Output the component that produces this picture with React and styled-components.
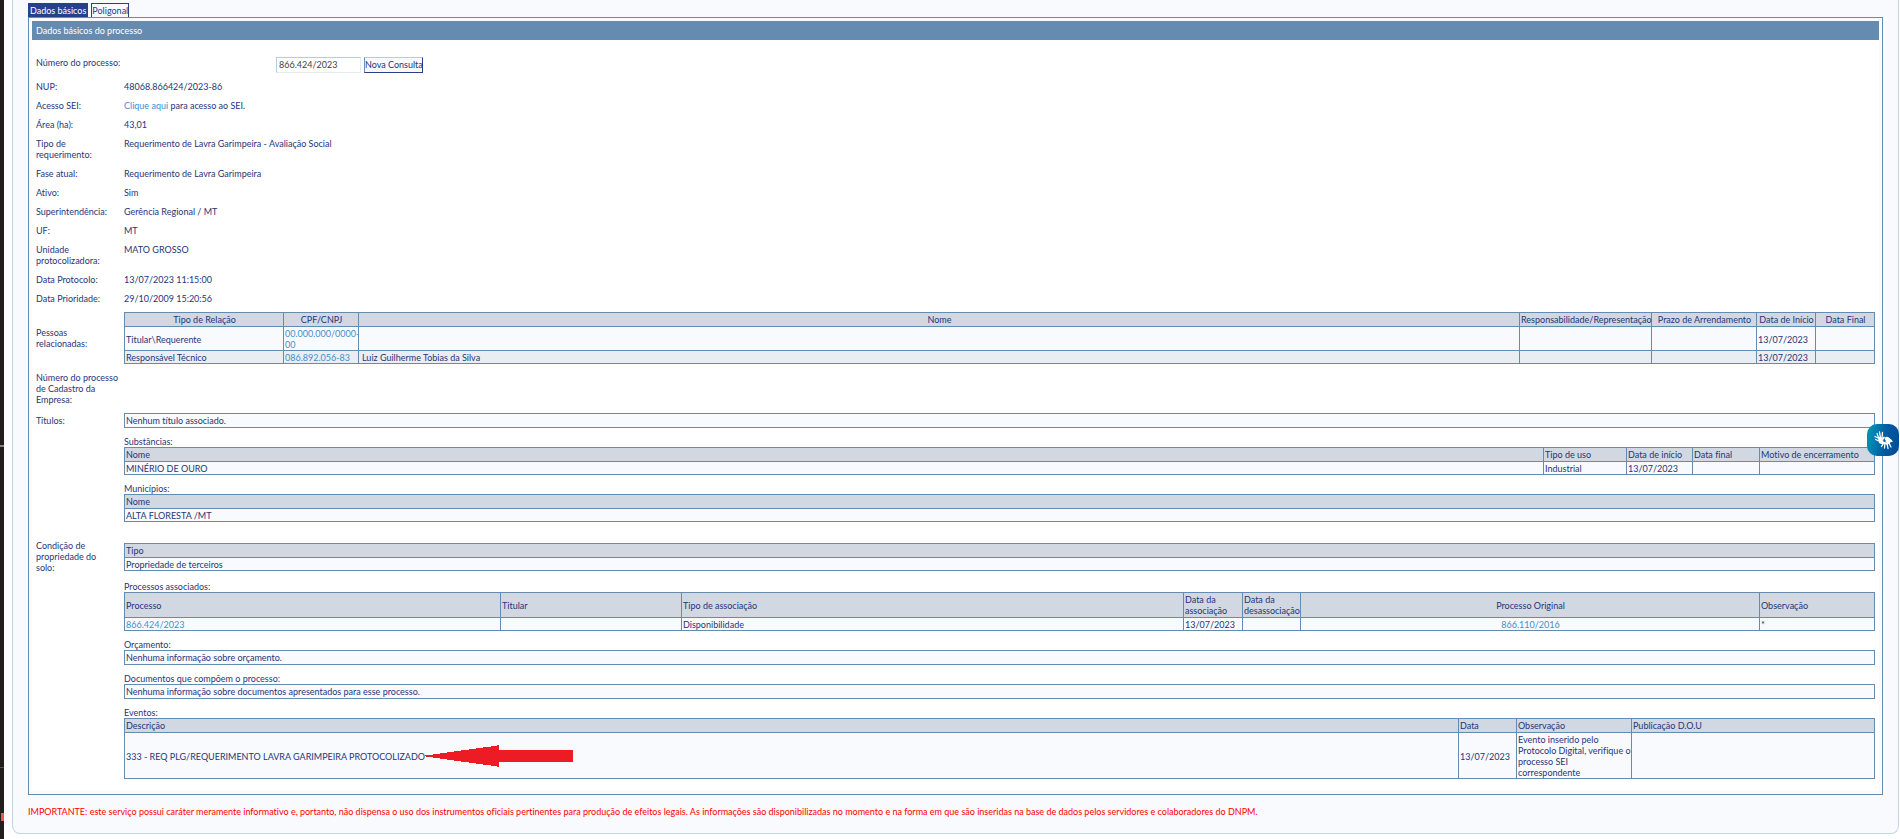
import React from 'react';
import styled, { createGlobalStyle } from 'styled-components';

const navy = '#27408b';
const ink = '#1f3579';
const steel = '#668bb1';
const sky = '#3d90cf';
const mist = '#f9fafd';

const GlobalStyle = createGlobalStyle`
  * { box-sizing: border-box; }
  body {
    margin: 0;
    background: #fff;
    color: ${ink};
    font: 9px/11px Lato, 'DejaVu Sans Condensed', sans-serif;
    font-variant-ligatures: none;
  }
`;

const Page = styled.div`
  display: flex;
  min-height: 100vh;
`;

const EdgeStrip = styled.div`
  flex: 0 0 4px;
  display: flex;
  flex-direction: column;
  align-items: flex-end;
  background: #211e1c;
`;

const EdgeMark = styled.span`
  width: ${(p) => p.$width}px;
  height: ${(p) => p.$height}px;
  margin-top: ${(p) => p.$gap}px;
  background: ${(p) => p.$color};
`;

const Card = styled.main`
  flex: 1;
  min-width: 0;
  margin: 0 1px 5px 8px;
  padding: 3px 15px 14px;
  background: ${mist};
  border: 1px solid #c3d6e2;
  border-top: 0;
  border-radius: 0 0 8px 8px;
`;

const Tabs = styled.nav`
  display: flex;
  gap: 3px;
`;

const Tab = styled.button`
  height: 14px;
  padding: 0 ${(p) => (p.$active ? 1 : 0)}px;
  font: inherit;
  font-variant-ligatures: none;
  color: ${(p) => (p.$active ? '#fff' : navy)};
  background: ${(p) => (p.$active ? navy : mist)};
  border: 1px solid ${navy};
  border-bottom: 0;
`;

const Panel = styled.section`
  padding: 3px;
  border: 1px solid ${steel};
`;

const PanelTitle = styled.h1`
  margin: 0;
  padding: 4px;
  color: #fff;
  background: ${steel};
  font-size: 9px;
  font-weight: 400;
  line-height: 11px;
`;

const Fields = styled.div`
  display: flex;
  flex-direction: column;
  gap: 8px;
  padding: 17px 4px 12px;
  background: #fff;
`;

const Field = styled.div`
  display: grid;
  grid-template-columns: 88px minmax(0, 1fr);
  align-items: ${(p) => p.$align || 'start'};
`;

const FieldLabel = styled.div`
  padding-right: 5px;
  white-space: pre-line;
`;

const Spacer = styled.div`
  height: 2px;
`;

const SearchRow = styled.form`
  display: flex;
  align-items: flex-start;
`;

const SearchLabel = styled.label`
  flex: 0 0 240px;
`;

const NumberInput = styled.input`
  width: 85px;
  height: 16px;
  margin-right: 3px;
  padding: 0 2px 2px;
  font: inherit;
  color: #444;
  background: #fff;
  border: 1px solid #b9cdd8;
  border-right-color: #e6ebee;
  border-bottom-color: #e6ebee;
`;

const QueryButton = styled.button`
  width: 59px;
  height: 16px;
  padding: 0 0 2px;
  font: inherit;
  white-space: nowrap;
  color: ${ink};
  background: ${mist};
  border: 1px solid ${navy};
  border-top-color: #b9cdd8;
  border-left-color: #6d8db4;
`;

const Link = styled.a`
  color: ${sky};
  text-decoration: none;
`;

const SubHeading = styled.h2`
  margin: 0;
  font: inherit;
  font-variant-ligatures: none;
`;

const Notice = styled.p`
  margin: 0;
  padding: 1px;
  background: ${mist};
  border: 1px solid ${steel};
`;

const DataTable = styled.table`
  width: 100%;
  table-layout: fixed;
  border-collapse: collapse;
  background: ${mist};
`;

const Col = styled.col`
  width: ${(p) => (p.$width ? `${p.$width}px` : 'auto')};
`;

const Head = styled.th`
  padding: 1px 0 1px 1px;
  font-weight: 400;
  white-space: ${(p) => (p.$wrap ? 'normal' : 'nowrap')};
  text-align: ${(p) => p.$align || 'left'};
  background: #d1d8e2;
  border: 1px solid ${steel};
`;

const Row = styled.tr`
  height: 13px;
  background: ${(p) => (p.$alt ? '#eaeef2' : mist)};
`;

const Cell = styled.td`
  padding: 1px 0 0 1px;
  text-align: ${(p) => p.$align || 'left'};
  border: 1px solid ${steel};
`;

const NameCell = styled(Cell)`
  padding-left: 3px;
`;

const EventContent = styled.div`
  display: flex;
  align-items: center;
`;

const Warning = styled.p`
  margin: 11px 0 0;
  color: #f00;
`;

const LibrasButton = styled.button`
  position: fixed;
  top: 424px;
  right: 1px;
  display: grid;
  place-items: center;
  width: 32px;
  height: 32px;
  padding: 0;
  border: 0;
  border-radius: 10px;
  background: linear-gradient(100deg, #0090b4 10%, #0058a0 60%, #004a98);
`;

function LabelledField({ label, children, align }) {
  return (
    <Field $align={align}>
      <FieldLabel>{label}</FieldLabel>
      <div>{children}</div>
    </Field>
  );
}

function Table({ label, columns, children }) {
  return (
    <DataTable aria-label={label}>
      <colgroup>
        {columns.map((c, i) => (
          <Col key={i} $width={c.width} />
        ))}
      </colgroup>
      <thead>
        <tr>
          {columns.map((c, i) => (
            <Head key={i} scope="col" $align={c.align} $wrap={c.wrap}>
              {c.title}
            </Head>
          ))}
        </tr>
      </thead>
      <tbody>{children}</tbody>
    </DataTable>
  );
}

function Block({ title, children }) {
  return (
    <LabelledField label="">
      <SubHeading>{title}</SubHeading>
      {children}
    </LabelledField>
  );
}

const Arrow = () => (
  <svg width="148" height="22" viewBox="0 0 148 22" aria-hidden="true">
    <path
      fill="#ed1c24"
      d="M0 10h8V9h7V8h7V7h7V6h7V5h8V4h7V3h7V2h8V1h6V0h2v5h74v12H74v5h-2v-1h-6v-1h-8v-1h-7v-1h-7v-1h-8v-1h-7v-1h-7v-1h-7v-1H8v-1H1v-1H0z"
    />
  </svg>
);

const HandsIcon = () => (
  <svg width="19" height="19" viewBox="0 0 38 38" fill="none" stroke="#fff" strokeLinecap="round" aria-hidden="true">
    <path fill="#fff" stroke="none" d="M8 13 Q13 11 16 14 L20 11 Q23 13 19 18 Q23 24 17 27 L10 24Z" />
    <path strokeWidth="2.6" d="M10 15L2 11M10 16L6 5M13 14L11 2M16 14L17 3M10 20L3 17" />
    <path fill="#fff" stroke="none" d="M19 14 Q25 9 31 14 L36 19 L31 25 Q27 29 22 26 L17 23 L24 20Z" />
    <path strokeWidth="2.6" d="M32 17L36 21M29 22L34 32M26 24L28 35M22 24L21 34M20 23L15 31" />
    <path stroke="#0075aa" strokeWidth="1.5" d="M22 14L18 20L24 22" />
  </svg>
);

const simpleFields = [
  ['NUP:', '48068.866424/2023-86'],
  ['Acesso SEI:', <><Link href="#sei">Clique aqui</Link> para acesso ao SEI.</>],
  ['Área (ha):', '43,01'],
  ['Tipo de requerimento:', 'Requerimento de Lavra Garimpeira - Avaliação Social'],
  ['Fase atual:', 'Requerimento de Lavra Garimpeira'],
  ['Ativo:', 'Sim'],
  ['Superintendência:', 'Gerência Regional / MT'],
  ['UF:', 'MT'],
  ['Unidade protocolizadora:', 'MATO GROSSO'],
  ['Data Protocolo:', '13/07/2023 11:15:00'],
  ['Data Prioridade:', '29/10/2009 15:20:56'],
];

const peopleColumns = [
  { title: 'Tipo de Relação', width: 159, align: 'center' },
  { title: 'CPF/CNPJ', width: 75, align: 'center' },
  { title: 'Nome', align: 'center' },
  { title: 'Responsabilidade/Representação', width: 132, align: 'center' },
  { title: 'Prazo de Arrendamento', width: 105, align: 'center' },
  { title: 'Data de Início', width: 59, align: 'center' },
  { title: 'Data Final', width: 59, align: 'center' },
];

const substanceColumns = [
  { title: 'Nome' },
  { title: 'Tipo de uso', width: 83 },
  { title: 'Data de início', width: 66 },
  { title: 'Data final', width: 67 },
  { title: 'Motivo de encerramento', width: 115 },
];

const processColumns = [
  { title: 'Processo', width: 376 },
  { title: 'Titular', width: 181 },
  { title: 'Tipo de associação', width: 502 },
  { title: 'Data da associação', width: 59, wrap: true },
  { title: 'Data da desassociação', width: 58, wrap: true },
  { title: 'Processo Original', align: 'center' },
  { title: 'Observação', width: 115 },
];

const eventColumns = [
  { title: 'Descrição' },
  { title: 'Data', width: 58 },
  { title: 'Observação', width: 115 },
  { title: 'Publicação D.O.U', width: 243 },
];

export default function App() {
  return (
    <Page>
      <GlobalStyle />
      <EdgeStrip>
        <EdgeMark $gap={445} $width={4} $height={2} $color="#85827f" />
        <EdgeMark $gap={320} $width={4} $height={1} $color="#55524f" />
        <EdgeMark $gap={45} $width={3} $height={8} $color="#f4504c" />
      </EdgeStrip>
      <Card>
        <Tabs>
          <Tab type="button" $active>Dados básicos</Tab>
          <Tab type="button">Poligonal</Tab>
        </Tabs>
        <Panel>
          <PanelTitle>Dados básicos do processo</PanelTitle>
          <Fields>
            <SearchRow onSubmit={(e) => e.preventDefault()}>
              <SearchLabel htmlFor="numero">Número do processo:</SearchLabel>
              <NumberInput id="numero" type="text" defaultValue="866.424/2023" />
              <QueryButton type="submit">Nova Consulta</QueryButton>
            </SearchRow>

            {simpleFields.map(([label, value]) => (
              <LabelledField key={label} label={label}>{value}</LabelledField>
            ))}

            <LabelledField label="Pessoas relacionadas:" align="center">
              <Table label="Pessoas relacionadas" columns={peopleColumns}>
                <Row>
                  <Cell>Titular\Requerente</Cell>
                  <Cell><Link href="#cnpj">00.000.000/0000-00</Link></Cell>
                  <NameCell />
                  <Cell />
                  <Cell />
                  <Cell>13/07/2023</Cell>
                  <Cell />
                </Row>
                <Row $alt>
                  <Cell>Responsável Técnico</Cell>
                  <Cell><Link href="#cpf">086.892.056-83</Link></Cell>
                  <NameCell>Luiz Guilherme Tobias da Silva</NameCell>
                  <Cell />
                  <Cell />
                  <Cell>13/07/2023</Cell>
                  <Cell />
                </Row>
              </Table>
            </LabelledField>

            <LabelledField label="Número do processo de Cadastro da Empresa:" />

            <LabelledField label="Títulos:" align="center">
              <Notice>Nenhum título associado.</Notice>
            </LabelledField>

            <Block title="Substâncias:">
              <Table label="Substâncias" columns={substanceColumns}>
                <Row>
                  <Cell>MINÉRIO DE OURO</Cell>
                  <Cell>Industrial</Cell>
                  <Cell>13/07/2023</Cell>
                  <Cell />
                  <Cell />
                </Row>
              </Table>
            </Block>

            <Block title="Municípios:">
              <Table label="Municípios" columns={[{ title: 'Nome' }]}>
                <Row>
                  <Cell>ALTA FLORESTA /MT</Cell>
                </Row>
              </Table>
            </Block>

            <Spacer />

            <LabelledField label={'Condição de\npropriedade do\nsolo:'} align="center">
              <Table label="Condição de propriedade do solo" columns={[{ title: 'Tipo' }]}>
                <Row>
                  <Cell>Propriedade de terceiros</Cell>
                </Row>
              </Table>
            </LabelledField>

            <Block title="Processos associados:">
              <Table label="Processos associados" columns={processColumns}>
                <Row>
                  <Cell><Link href="#processo">866.424/2023</Link></Cell>
                  <Cell />
                  <Cell>Disponibilidade</Cell>
                  <Cell>13/07/2023</Cell>
                  <Cell />
                  <Cell $align="center"><Link href="#original">866.110/2016</Link></Cell>
                  <Cell>*</Cell>
                </Row>
              </Table>
            </Block>

            <Block title="Orçamento:">
              <Notice>Nenhuma informação sobre orçamento.</Notice>
            </Block>

            <Block title="Documentos que compõem o processo:">
              <Notice>Nenhuma informação sobre documentos apresentados para esse processo.</Notice>
            </Block>

            <Block title="Eventos:">
              <Table label="Eventos" columns={eventColumns}>
                <Row>
                  <Cell>
                    <EventContent>
                      333 - REQ PLG/REQUERIMENTO LAVRA GARIMPEIRA PROTOCOLIZADO
                      <Arrow />
                    </EventContent>
                  </Cell>
                  <Cell>13/07/2023</Cell>
                  <Cell>Evento inserido pelo Protocolo Digital, verifique o processo SEI correspondente</Cell>
                  <Cell />
                </Row>
              </Table>
            </Block>
          </Fields>
        </Panel>
        <Warning>
          IMPORTANTE: este serviço possui caráter meramente informativo e, portanto, não dispensa o uso dos
          instrumentos oficiais pertinentes para produção de efeitos legais. As informações são disponibilizadas no
          momento e na forma em que são inseridas na base de dados pelos servidores e colaboradores do DNPM.
        </Warning>
      </Card>
      <LibrasButton type="button" aria-label="Acessibilidade em Libras">
        <HandsIcon />
      </LibrasButton>
    </Page>
  );
}
